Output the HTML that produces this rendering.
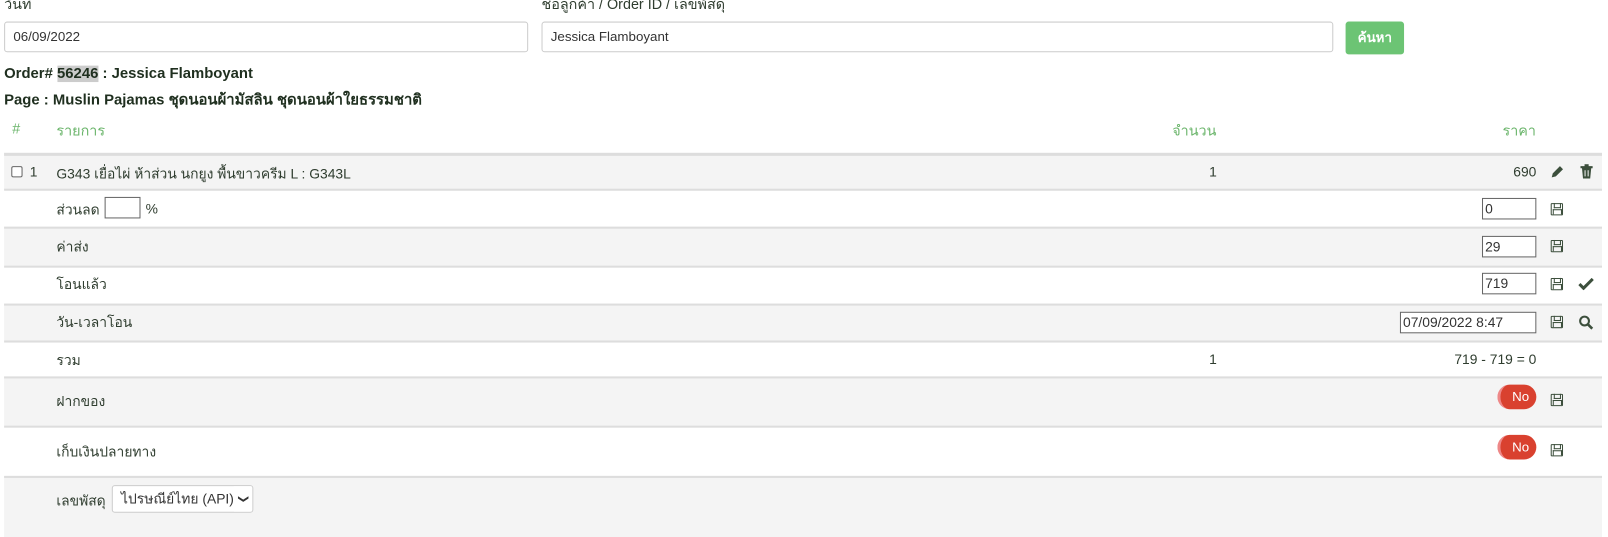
<!DOCTYPE html><html><head><meta charset="utf-8"><style>
*{box-sizing:border-box}body{margin:0;width:1608px;height:524px;background:#fff;font-family:"Liberation Sans",sans-serif;font-size:13.5px;color:#2f3d2f;position:relative;overflow:hidden}
#w{position:absolute;left:0;top:0;width:1568px;height:512px;transform:scale(1.0256);transform-origin:0 0}
.a{position:absolute;white-space:nowrap}
.r{position:absolute;white-space:nowrap;text-align:right}
.inp{position:absolute;border:1px solid #ccc;border-radius:3px;background:#fff;padding:0 8px;line-height:28px;font-size:13px;color:#333}
.row{position:absolute;left:4px;width:1558px;border-top:2px solid #ddd}
.g{background:#f4f4f4}
.box{position:absolute;border:1px solid #666;background:#fff;height:21px;line-height:19px;padding-left:2px;font-size:13.5px;color:#333}
.sv{position:absolute;width:12px;height:12px;border:1.5px solid #3c4f3c;border-radius:1px}
.sv:before{content:"";position:absolute;left:2px;top:-1px;width:5px;height:4px;border:1.5px solid #3c4f3c;border-top:none}
.sv:after{content:"";position:absolute;left:1px;bottom:0px;width:7px;height:4px;border:1.5px solid #3c4f3c;border-bottom:none}
.no{position:absolute;width:38px;height:24px;border-radius:12px;background:#d9412f;color:#fff;font-size:13px;line-height:24px;text-align:right;padding-right:7px;border-left:3px solid #e88}
</style></head><body><div id="w">
<div class="a" style="left:4px;top:-6px;font-size:14px">วันที่</div>
<div class="a" style="left:528px;top:-6px;font-size:14px">ชื่อลูกค้า / Order ID / เลขพัสดุ</div>
<div class="inp" style="left:4px;top:21px;width:511px;height:30px">06/09/2022</div>
<div class="inp" style="left:528px;top:21px;width:772px;height:30px">Jessica Flamboyant</div>
<div class="a" style="left:1312px;top:21px;width:57px;height:32px;background:#6cc474;border-radius:3px;color:#fff;text-align:center;line-height:31px;font-size:13px;font-weight:bold">ค้นหา</div>
<div class="a" style="left:4px;top:64px;font-size:14.5px;font-weight:bold;color:#1f2f1f">Order# <span style="background:#ccc">56246</span> : Jessica Flamboyant</div>
<div class="a" style="left:4px;top:86px;font-size:14.5px;font-weight:bold;color:#1f2f1f">Page : Muslin Pajamas ชุดนอนผ้ามัสลิน ชุดนอนผ้าใยธรรมชาติ</div>
<div class="a" style="left:12px;top:117px;color:#6bb56b;font-size:14px">#</div>
<div class="a" style="left:55px;top:117px;color:#6bb56b;font-size:14px">รายการ</div>
<div class="a" style="left:1143px;top:117px;color:#6bb56b;font-size:14px">จำนวน</div>
<div class="a" style="left:1465px;top:117px;color:#6bb56b;font-size:14px">ราคา</div>

<div class="row g" style="top:149px;height:36px;border-top:3px solid #ddd"></div>
<div class="row" style="top:184px;height:37px"></div>
<div class="row g" style="top:221px;height:38px"></div>
<div class="row" style="top:259px;height:37px"></div>
<div class="row g" style="top:296px;height:36px"></div>
<div class="row" style="top:332px;height:35px"></div>
<div class="row g" style="top:367px;height:48px"></div>
<div class="row" style="top:415px;height:49px"></div>
<div class="row g" style="top:464px;height:60px"></div>

<div class="a" style="left:11px;top:162px;width:11px;height:11px;border:1px solid #666;border-radius:2px;background:#fff"></div>
<div class="a" style="left:29px;top:160px">1</div>
<div class="a" style="left:55px;top:158px">G343 เยื่อไผ่ ห้าส่วน นกยูง พื้นขาวครีม L : G343L</div>
<div class="a" style="left:1179px;top:160px">1</div>
<div class="r" style="right:70px;top:160px">690</div>
<svg class="a" style="left:1511px;top:161px" width="14" height="14" viewBox="0 0 14 14"><path d="M2 12l1-4 7-7 3 3-7 7z" fill="#3c4f3c"/></svg>
<svg class="a" style="left:1541px;top:160px" width="12" height="14" viewBox="0 0 12 14"><path d="M0 2h12v2H0zM4 0h4v2H4zM1.5 4h9l-1 10h-7z" fill="#3c4f3c"/><path d="M4.5 6v6M7.5 6v6" stroke="#f4f4f4" stroke-width="1"/></svg>

<div class="a" style="left:55px;top:193px">ส่วนลด</div>
<div class="box" style="left:102px;top:192px;width:35px"></div>
<div class="a" style="left:142px;top:196px">%</div>
<div class="box" style="left:1445px;top:193px;width:53px">0</div>
<div class="sv" style="left:1512px;top:198px"></div>

<div class="a" style="left:55px;top:229px">ค่าส่ง</div>
<div class="box" style="left:1445px;top:230px;width:53px">29</div>
<div class="sv" style="left:1512px;top:234px"></div>

<div class="a" style="left:55px;top:266px">โอนแล้ว</div>
<div class="box" style="left:1445px;top:266px;width:53px">719</div>
<div class="sv" style="left:1512px;top:271px"></div>
<svg class="a" style="left:1539px;top:271px" width="15" height="12" viewBox="0 0 15 12"><path d="M1 6l4 4 9-9" stroke="#3c4f3c" stroke-width="3" fill="none"/></svg>

<div class="a" style="left:55px;top:303px">วัน-เวลาโอน</div>
<div class="box" style="left:1365px;top:304px;width:133px">07/09/2022 8:47</div>
<div class="sv" style="left:1512px;top:308px"></div>
<svg class="a" style="left:1539px;top:307px" width="15" height="15" viewBox="0 0 15 15"><circle cx="6" cy="6" r="4.3" stroke="#3c4f3c" stroke-width="2" fill="none"/><path d="M9 9l4.5 4.5" stroke="#3c4f3c" stroke-width="2.5"/></svg>

<div class="a" style="left:55px;top:340px">รวม</div>
<div class="a" style="left:1179px;top:343px">1</div>
<div class="r" style="right:70px;top:343px">719 - 719 = 0</div>

<div class="a" style="left:55px;top:380px">ฝากของ</div>
<div class="no" style="left:1460px;top:375px">No</div>
<div class="sv" style="left:1512px;top:384px"></div>

<div class="a" style="left:55px;top:429px">เก็บเงินปลายทาง</div>
<div class="no" style="left:1460px;top:424px">No</div>
<div class="sv" style="left:1512px;top:433px"></div>

<div class="a" style="left:55px;top:477px">เลขพัสดุ</div>
<div class="a" style="left:109px;top:473px;width:138px;height:27px;border:1px solid #ccc;border-radius:3px;background:#fff;padding-left:8px;line-height:25px;color:#333;overflow:hidden">ไปรษณีย์ไทย (API) <span style="position:absolute;right:0;top:0;width:18px;background:#fff;text-align:center;font-size:10px"><span style="display:inline-block;transform:rotate(90deg)">&#10095;</span></span></div>
</div></body></html>
